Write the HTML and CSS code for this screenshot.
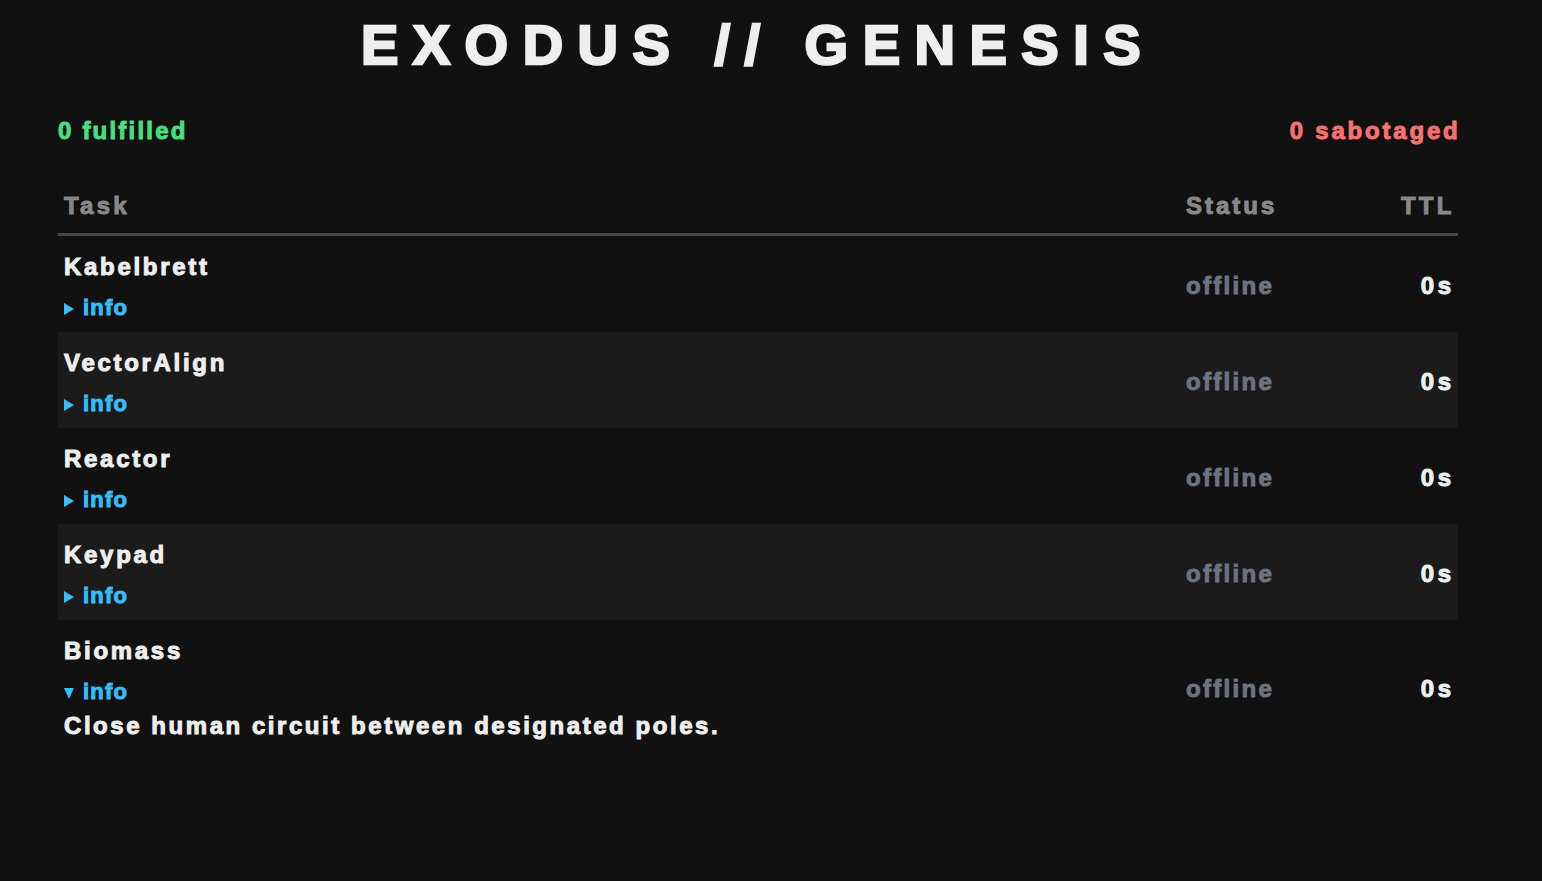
FILE: index.html
```html
<!DOCTYPE html>
<html lang="en">
<head>
<meta charset="utf-8">
<title>EXODUS // GENESIS</title>
<link rel="stylesheet" href="styles.css">
</head>
<body>
<main class="page">
  <h1 class="title">EXODUS // GENESIS</h1>
  <div class="stats">
    <span class="stat stat-ok">0 fulfilled</span>
    <span class="stat stat-bad">0 sabotaged</span>
  </div>
  <div class="table">
    <div class="row head">
      <div class="cell">Task</div>
      <div class="cell">Status</div>
      <div class="cell ttl">TTL</div>
    </div>
    <div class="row">
      <div class="cell task">
        <div class="name">Kabelbrett</div>
        <details class="info"><summary>info</summary></details>
      </div>
      <div class="cell status">offline</div>
      <div class="cell ttl value">0s</div>
    </div>
    <div class="row alt">
      <div class="cell task">
        <div class="name">VectorAlign</div>
        <details class="info"><summary>info</summary></details>
      </div>
      <div class="cell status">offline</div>
      <div class="cell ttl value">0s</div>
    </div>
    <div class="row">
      <div class="cell task">
        <div class="name">Reactor</div>
        <details class="info"><summary>info</summary></details>
      </div>
      <div class="cell status">offline</div>
      <div class="cell ttl value">0s</div>
    </div>
    <div class="row alt">
      <div class="cell task">
        <div class="name">Keypad</div>
        <details class="info"><summary>info</summary></details>
      </div>
      <div class="cell status">offline</div>
      <div class="cell ttl value">0s</div>
    </div>
    <div class="row">
      <div class="cell task">
        <div class="name">Biomass</div>
        <details class="info" open><summary>info</summary><p class="desc">Close human circuit between designated poles.</p></details>
      </div>
      <div class="cell status">offline</div>
      <div class="cell ttl value">0s</div>
    </div>
  </div>
</main>
</body>
</html>
```
FILE: styles.css
```css
html, body {
  margin: 0;
  padding: 0;
  background: #111111;
}
body {
  font-family: "Liberation Sans", Arial, sans-serif;
  font-weight: 700;
  color: #eeeeee;
  -webkit-text-stroke: 1px currentColor;
}
.page {
  width: 1400px;
  margin-left: 58px;
}
.title {
  margin: 0;
  padding-top: 17px;
  font-size: 56px;
  line-height: 56px;
  letter-spacing: 14.5px;
  text-align: center;
  color: #eeeeee;
  -webkit-text-stroke: 2.5px currentColor;
}
.stats {
  display: flex;
  justify-content: space-between;
  margin-top: 43px;
  font-size: 24px;
  line-height: 30px;
  letter-spacing: 2.2px;
}
.stat-ok { color: #4ade80; }
.stat-bad { color: #f87171; letter-spacing: 2.8px; margin-right: -2.5px; }
.table {
  margin-top: 33px;
}
.row {
  display: grid;
  grid-template-columns: 1fr 162px 116px;
  font-size: 24px;
  line-height: 30px;
  letter-spacing: 2.7px;
}
.row.alt { background: #1b1b1b; }
.cell {
  padding: 16px 6px 12px;
  align-self: center;
}
.head {
  border-bottom: 3px solid #474747;
  color: #888888;
  letter-spacing: 3.2px;
}
.head .cell { padding: 12px 6px 12px; }
.ttl { text-align: right; margin-right: -2.5px; }
.status { color: #6b7280; letter-spacing: 2.3px; }
.head .cell:nth-child(2) { letter-spacing: 3px; }
.value { color: #eeeeee; letter-spacing: 3.5px; }
.name { color: #eeeeee; }
.info {
  margin-top: 14px;
  font-size: 22px;
  line-height: 24px;
  letter-spacing: 1.2px;
  color: #38bdf8;
}
.info summary {
  display: block;
  list-style: none;
  cursor: pointer;
  color: #38bdf8;
}
.info summary::-webkit-details-marker { display: none; }
.info summary::before {
  content: "";
  display: inline-block;
  width: 0;
  height: 0;
  border-left: 10px solid #38bdf8;
  border-top: 6px solid transparent;
  border-bottom: 6px solid transparent;
  margin-right: 9px;
  vertical-align: 0px;
}
.info[open] summary::before {
  border-left: 5px solid transparent;
  border-right: 5px solid transparent;
  border-top: 11px solid #38bdf8;
  border-bottom: 0;
  margin-right: 9px;
}
.desc {
  margin: 7px 0 0;
  font-size: 24px;
  line-height: 30px;
  letter-spacing: 2.55px;
  color: #eeeeee;
}
```
